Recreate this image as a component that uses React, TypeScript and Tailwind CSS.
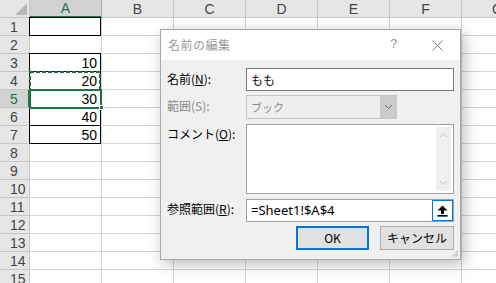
import React from "react";

const COLS = ["A", "B", "C", "D", "E", "F", "G"];
const VALUES: Record<number, string> = { 3: "10", 4: "20", 5: "30", 6: "40", 7: "50" };
const BORDERED = new Set([1, 3, 4, 5, 6, 7]);

const uiFont = { fontFamily: '"Noto Sans CJK JP", "Noto Sans", sans-serif' };
const cellFont = { fontFamily: '"Liberation Sans", "Noto Sans CJK JP", sans-serif' };

function Sheet() {
  const rows = Array.from({ length: 15 }, (_, i) => i + 1);
  return (
    <div className="w-[496px] h-[283px] overflow-hidden bg-white text-[#444]" style={cellFont}>
      <div className="flex h-[18px]">
        <div className="relative w-[30px] shrink-0 h-[18px] bg-[#e6e6e6] border-r border-b border-[#c6c6c6]">
          <svg className="absolute right-[2px] bottom-[2px]" width="12" height="12" viewBox="0 0 12 12">
            <polygon points="12,0 12,12 0,12" fill="#b8b8b8" />
          </svg>
        </div>
        {COLS.map((c) => (
          <div
            key={c}
            className={
              "w-[72px] shrink-0 h-[18px] border-r flex items-center justify-center text-[14px] leading-none " +
              (c === "A"
                ? "bg-[#d2d2d2] border-r-[#ababab] border-b-2 border-b-[#217346] text-[#217346]"
                : "bg-[#e6e6e6] border-r-[#c6c6c6] border-b border-b-[#c6c6c6]")
            }
          >
            {c}
          </div>
        ))}
      </div>
      {rows.map((r) => (
        <div key={r} className="flex h-[18px]">
          <div
            className={
              "w-[30px] shrink-0 h-[18px] border-b flex items-center pl-[10px] text-[14px] leading-none " +
              (r === 5
                ? "bg-[#d2d2d2] border-b-[#c6c6c6] border-r-2 border-r-[#217346] text-[#217346]"
                : "bg-[#e6e6e6] border-b-[#c6c6c6] border-r border-r-[#c6c6c6]")
            }
          >
            {r}
          </div>
          {COLS.map((c) => (
            <div
              key={c}
              className="relative w-[72px] shrink-0 h-[18px] border-r border-b border-[#d4d4d4] flex items-center justify-end pr-[4px] text-[14px] text-black leading-none"
            >
              {c === "A" && BORDERED.has(r) && (
                <div className="absolute left-[-1px] top-[-1px] w-[72px] h-[19px] border border-black" />
              )}
              {c === "A" && <span className="relative">{VALUES[r] ?? ""}</span>}
              {c === "A" && r === 4 && (
                <svg className="absolute left-[-1px] top-[-1px] z-10" width="73" height="20" viewBox="0 0 73 20" shapeRendering="crispEdges">
                  <rect x="1" y="1" width="70" height="18" fill="none" stroke="#1f6b40" strokeWidth="2" strokeDasharray="4 2" />
                </svg>
              )}
              {c === "A" && r === 5 && (
                <>
                  <div className="absolute left-[-1px] top-[-1px] w-[73px] h-[20px] border-2 border-[#217346] z-10" />
                  <div className="absolute left-[69px] top-[15px] w-[5px] h-[5px] bg-[#217346] border border-white z-10" />
                </>
              )}
            </div>
          ))}
        </div>
      ))}
    </div>
  );
}

function UpArrowIcon() {
  return (
    <svg width="11" height="12" viewBox="0 0 11 12">
      <polygon points="5.5,0.5 10.5,5.5 7,5.5 7,9 4,9 4,5.5 0.5,5.5" fill="#000" />
      <rect x="0.5" y="10" width="10" height="1.6" fill="#000" />
    </svg>
  );
}

function Chevron({ dir, color = "#666" }: { dir: "up" | "down"; color?: string }) {
  return (
    <svg width="9" height="6" viewBox="0 0 9 6">
      <polyline
        points={dir === "down" ? "1,1 4.5,4.5 8,1" : "1,5 4.5,1.5 8,5"}
        fill="none"
        stroke={color}
        strokeWidth="1"
      />
    </svg>
  );
}

function Dialog() {
  return (
    <div
      className="absolute left-[160px] top-[29px] z-20 w-[301px] h-[231px] border border-[#a8a8a8] bg-[#f0f0f0] shadow-[3px_4px_14px_rgba(0,0,0,0.28)] flex flex-col text-[12px] text-black"
      style={uiFont}
    >
      <div className="h-[30px] shrink-0 bg-white flex items-center pl-[7px] relative">
        <span className="text-[#9a9a9a] text-[12px] tracking-[0.5px]">名前の編集</span>
        <span className="absolute left-[229px] top-[7px] text-[#9a9a9a] text-[13px] leading-none" style={cellFont}>?</span>
        <svg className="absolute left-[271px] top-[10px]" width="11" height="11" viewBox="0 0 11 11">
          <path d="M0.5 0.5 L10.5 10.5 M10.5 0.5 L0.5 10.5" stroke="#7a7a7a" strokeWidth="1" />
        </svg>
      </div>
      <div className="flex flex-col pt-[8px] pl-[6px] pr-[5px] relative flex-1">
        <div className="flex items-center h-[23px]">
          <div className="w-[79px] shrink-0 -mt-[2px]">
            名前(<span className="underline">N</span>):
          </div>
          <div className="w-[208px] h-[23px] bg-white border border-[#7a7a7a] flex items-center pl-[4px] text-[12px]">
            もも
          </div>
        </div>
        <div className="flex items-center h-[24px] mt-[4px]">
          <div className="w-[79px] shrink-0 text-[#8a8a8a] -mt-[3px]">範囲(S):</div>
          <div className="w-[151px] h-[24px] bg-[#efefef] border border-[#c6c6c6] flex items-center">
            <span className="flex-1 pl-[4px] text-[#8a8a8a] text-[11px]">ブック</span>
            <div className="w-[16px] h-[22px] bg-[#cccccc] flex items-center justify-center">
              <Chevron dir="down" color="#6a6a6a" />
            </div>
          </div>
        </div>
        <div className="flex items-start h-[70px] mt-[5px]">
          <div className="w-[79px] shrink-0 pt-[1px]">
            コメント(<span className="underline">O</span>):
          </div>
          <div className="w-[208px] h-[70px] bg-white border border-[#a0a0a0] flex justify-end p-[2px]">
            <div className="w-[15px] h-full bg-[#f0f0f0] flex flex-col justify-between items-center py-[5px]">
              <Chevron dir="up" color="#c0c0c0" />
              <Chevron dir="down" color="#c0c0c0" />
            </div>
          </div>
        </div>
        <div className="flex items-center h-[23px] mt-[5px]">
          <div className="w-[79px] shrink-0 -mt-[3px]">
            参照範囲(<span className="underline">R</span>):
          </div>
          <div className="w-[208px] h-[23px] bg-white border border-[#a0a0a0] flex items-center">
            <span className="flex-1 pl-[4px] text-[13px]" style={{ fontFamily: '"Noto Sans", sans-serif' }}>
              =Sheet1!$A$4
            </span>
            <div className="w-[21px] h-[21px] border border-[#0078d7] bg-white flex items-center justify-center">
              <UpArrowIcon />
            </div>
          </div>
        </div>
        <div className="flex justify-end gap-[11px] mt-[4px] pr-[1px]">
          <div className="w-[73px] h-[24px] bg-[#e1e1e1] border-2 border-[#0078d7] flex items-center justify-center text-[12px]">
            OK
          </div>
          <div className="w-[74px] h-[24px] bg-[#e1e1e1] border border-[#adadad] flex items-center justify-center text-[12px]">
            キャンセル
          </div>
        </div>
        <svg className="absolute right-[1px] bottom-[1px]" width="9" height="9" viewBox="0 0 9 9">
          <path d="M8 2 L2 8 M8 5 L5 8" stroke="#a0a0a0" strokeWidth="1.2" strokeDasharray="1.2 0.8" />
        </svg>
      </div>
    </div>
  );
}

export default function App() {
  return (
    <div className="relative w-[496px] h-[283px] overflow-hidden">
      <Sheet />
      <Dialog />
    </div>
  );
}
